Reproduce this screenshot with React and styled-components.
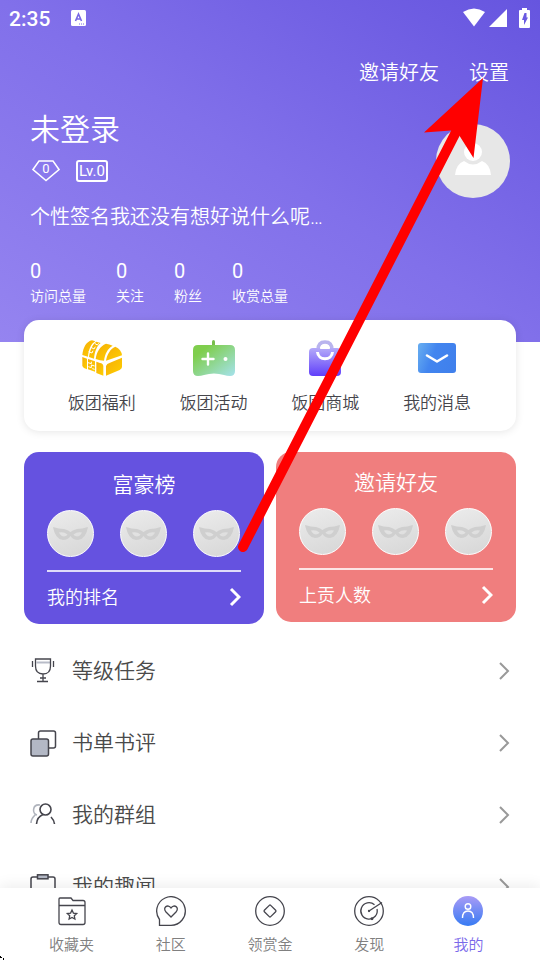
import React from "react";
import styled, { createGlobalStyle } from 'styled-components';

const colors = {
    primary: '#6552e0',
    coral: '#f07e7e',
    dark: '#45454b',
    gray: '#808080',
    active: '#7a69ea',
};

const GlobalStyle = createGlobalStyle`
  * {
    box-sizing: border-box;
  }

  body {
    margin: 0;
    background: #fff;
    font-family: Roboto, "Noto Sans CJK SC", sans-serif;
    font-weight: 350;
  }

  button {
    padding: 0;
    border: 0;
    background: none;
    color: inherit;
    font: inherit;
    cursor: pointer;
  }

  a {
    color: inherit;
    text-decoration: none;
  }

  svg {
    display: block;
    flex-shrink: 0;
  }
`;

const Screen = styled.div`
  position: relative;
  display: flex;
  flex-direction: column;
  height: 100vh;
  overflow: hidden;
`;

const Content = styled.main`
  flex: 1;
  min-height: 0;
  overflow-y: auto;
  scrollbar-width: none;
`;

const Header = styled.header`
  padding-bottom: 35px;
  color: #fff;
  background: linear-gradient(to top right, #9584f0 0%, #8170ea 50%, #6655df 100%);
`;

const StatusBar = styled.div`
  display: flex;
  align-items: center;
  height: 36px;
  padding: 0 10px 0 9px;
`;

const Clock = styled.span`
  font-size: 21px;
  font-weight: 500;
  line-height: 36px;
  margin-right: 21px;
  padding-top: 2px;
`;

const StatusIcons = styled.div`
  display: flex;
  align-items: center;
  gap: 11px;
  margin-left: auto;
`;

const TopActions = styled.div`
  display: flex;
  justify-content: flex-end;
  gap: 30px;
  padding: 0 31px;
  margin-top: 21px;
  font-size: 20px;
  line-height: 32px;
`;

const Profile = styled.section`
  display: flex;
  justify-content: space-between;
  padding: 19px 30px 0;
`;

const UserName = styled.h1`
  margin: 0;
  font-size: 30px;
  font-weight: 350;
  line-height: 44px;
`;

const Badges = styled.div`
  display: flex;
  align-items: center;
  gap: 16px;
  height: 38px;
  padding-left: 2px;
  font-weight: 400;
`;

const Gem = styled.span`
  display: grid;
  place-items: center;
  font-size: 13px;
  line-height: 16px;

  > * {
    grid-area: 1 / 1;
  }

  span {
    padding-bottom: 4px;
  }
`;

const Level = styled.span`
  padding: 0 1px;
  border: 2px solid #fff;
  border-radius: 3px;
  font-size: 15px;
  line-height: 18px;
`;

const Signature = styled.p`
  margin: 9px 0 0;
  font-size: 20px;
  line-height: 36px;
`;

const Avatar = styled.button`
  display: grid;
  place-items: center;
  width: 74px;
  height: 74px;
  margin-top: 16px;
  border-radius: 50%;
  background: #e7e7e7;
`;

const Stats = styled.dl`
  display: flex;
  gap: 30px;
  margin: 24px 0 0;
  padding: 0 30px;
`;

const Stat = styled.div`
  display: flex;
  flex-direction: column-reverse;
  gap: 2px;

  dt {
    font-size: 14px;
    line-height: 22px;
  }

  dd {
    margin: 0;
    font-size: 20px;
    font-weight: 400;
    line-height: 24px;
  }
`;

const Shortcuts = styled.nav`
  display: flex;
  position: relative;
  height: 111px;
  margin: -22px 24px 0;
  padding: 20px 23px 0 22px;
  border-radius: 15px;
  background: #fff;
  box-shadow: 0 1px 8px rgba(0, 0, 0, 0.1);
`;

const Shortcut = styled.a`
  display: flex;
  flex: 1;
  flex-direction: column;
  align-items: center;
  gap: 14px;
  color: ${colors.dark};
  font-size: 17px;
  line-height: 26px;
`;

const Cards = styled.div`
  display: grid;
  grid-template-columns: 1fr 1fr;
  align-items: start;
  gap: 12px;
  padding: 21px 24px 0;
`;

const Card = styled.section`
  padding: ${props => props.$compact ? '15px' : '17px'} 23px 8px;
  border-radius: 15px;
  background: ${props => props.$color};
  color: #fff;
`;

const CardTitle = styled.h2`
  margin: 0 0 9px;
  font-size: 21px;
  font-weight: 350;
  line-height: 32px;
  text-align: center;
`;

const Faces = styled.div`
  display: flex;
  justify-content: space-between;
  padding: 0 1px 13px 0;
  border-bottom: 2px solid rgba(255, 255, 255, 0.8);
`;

const Face = styled.span`
  display: grid;
  place-items: center;
  width: 47px;
  height: 47px;
  border: 1px solid #fff;
  border-radius: 50%;
  background: linear-gradient(160deg, #ececec, #d6d6d6);
`;

const CardLink = styled.a`
  display: flex;
  align-items: center;
  justify-content: space-between;
  padding-top: 8px;
  font-size: 18px;
  line-height: 36px;
`;

const Menu = styled.nav`
  padding-top: 11px;
`;

const MenuItem = styled.a`
  display: flex;
  align-items: center;
  gap: 15px;
  height: 72px;
  padding: 0 30px;
  color: #4a4a4a;
  font-size: 21px;
  line-height: 32px;

  span {
    flex: 1;
  }
`;

const TabBar = styled.nav`
  display: flex;
  position: relative;
  height: 72px;
  padding: 8px 22px 0;
  background: #fff;
  box-shadow: 0 -2px 14px rgba(0, 0, 0, 0.08);
`;

const Tab = styled.button`
  display: flex;
  flex: 1;
  flex-direction: column;
  align-items: center;
  gap: 8px;
  color: ${props => props.$active ? colors.active : colors.gray};
  font-size: 15px;
  line-height: 22px;
`;

const Pointer = styled.svg`
  position: absolute;
  top: 0;
  left: 0;
  pointer-events: none;
`;

const ChestIcon = () => (
    <svg width="40" height="36" viewBox="0 0 120 108">
        <defs>
            <linearGradient id="chest" x1="0" y1="0" x2="1" y2="1">
                <stop offset="0" stopColor="#f5ad08"/>
                <stop offset="1" stopColor="#ffd000"/>
            </linearGradient>
        </defs>
        <g fill="url(#chest)">
            <path d="M1 45C3 22 14 4 30 1L40 4C26 12 20 30 18 50Z"/>
            <path d="M21 51C24 32 30 14 43 5L56 9C44 18 38 36 36 56Z"/>
            <path d="M41 57C44 36 54 18 72 11Q82 12 92 17C76 26 69 42 66 62Q54 62 41 57Z"/>
            <path d="M72 62C75 44 84 27 100 20Q118 28 120 46Z"/>
            <path d="M1 51L15 56V88L6 84Q1 81 1 76Z"/>
            <path d="M18 57L39 64V95L18 88Z"/>
            <path d="M43 65L54 69Q63 70 64 78V107L43 99Z"/>
            <path d="M72 78Q74 70 84 68L120 53V81Q120 86 113 90L72 107Z"/>
        </g>
        <path d="M20 35L30 39L33 32M27 22L36 27L40 20M38 10L46 15L50 10M18 68L28 71V65M38 78L28 75V83L19 80M38 88L31 86" fill="none" stroke="#fff" strokeWidth="3"/>
    </svg>
);

const GamepadIcon = () => (
    <svg width="42" height="36" viewBox="0 0 42 36">
        <defs>
            <linearGradient id="pad" x1="0" y1="0" x2="1" y2="1">
                <stop offset="0.2" stopColor="#7fce4d"/>
                <stop offset="1" stopColor="#a5e2ed"/>
            </linearGradient>
        </defs>
        <path d="M20.500 1.500V7" stroke="#79bd4c" strokeWidth="3" strokeLinecap="round"/>
        <path d="M5 5H37Q42 5 42 10V31Q42 36 37 36Q34 36 31 35Q21 32 11 35Q8 36 5 36Q0 36 0 31V10Q0 5 5 5Z" fill="url(#pad)"/>
        <path d="M15 13.500V24.500M9.500 19H20.500" stroke="#fff" strokeWidth="2.400" strokeLinecap="round"/>
        <circle cx="32.500" cy="19" r="2" fill="#fff"/>
    </svg>
);

const BagIcon = () => (
    <svg width="32" height="36" viewBox="0 0 32 36">
        <defs>
            <linearGradient id="bag" x1="0" y1="0" x2="0" y2="1">
                <stop offset="0" stopColor="#b4aaf9"/>
                <stop offset="1" stopColor="#603ffa"/>
            </linearGradient>
        </defs>
        <path d="M9 10Q9 2 16 2T23 10" fill="none" stroke="#b9b4ee" strokeWidth="3.500"/>
        <path d="M4 8H28Q32 8 32 12V32Q32 36 28 36H4Q0 36 0 32V12Q0 8 4 8Z" fill="url(#bag)"/>
        <path d="M8.500 12C9 21 23 21 23.500 12" fill="none" stroke="#fff" strokeWidth="3"/>
        <path d="M11 9Q12 4 16 4T21 9Z" fill="#fff"/>
    </svg>
);

const MailIcon = () => (
    <svg width="38" height="36" viewBox="0 0 38 36">
        <defs>
            <linearGradient id="mail" x1="0" y1="0.3" x2="1" y2="0.6">
                <stop offset="0" stopColor="#62a8f0"/>
                <stop offset="0.4" stopColor="#4285ef"/>
                <stop offset="1" stopColor="#4080ec"/>
            </linearGradient>
        </defs>
        <rect y="3" width="38" height="30" rx="3" fill="url(#mail)"/>
        <path d="M9 15.500L19 21.500L29 15.500" fill="none" stroke="#fff" strokeWidth="2.600" strokeLinecap="round" strokeLinejoin="round"/>
    </svg>
);

const Mask = () => (
    <svg width="35" height="13" viewBox="0 0 35 13">
        <path fillRule="evenodd" fill="#cfcfcf" d="M0 0Q6 2 11 2Q15 3 17.500 5Q20 3 24 2Q29 2 35 0Q33 12 25 13Q20 13 17.500 9Q15 13 10 13Q2 12 0 0ZM6 5.500Q8 9.500 11 9.500Q14 9 14.500 7.500Q11 4.500 6 5.500ZM29 5.500Q27 9.500 24 9.500Q21 9 20.500 7.500Q24 4.500 29 5.500Z"/>
    </svg>
);

const CardChevron = () => (
    <svg width="12" height="22" viewBox="0 0 12 22" fill="none" stroke="#fff" strokeWidth="3">
        <path d="M2 2L10 10L2 18"/>
    </svg>
);

const MenuChevron = () => (
    <svg width="11" height="18" viewBox="0 0 11 18" fill="none" stroke="#999" strokeWidth="2">
        <path d="M1 1L9 9L1 17"/>
    </svg>
);

const LineIcon = ({children, size = 27}) => (
    <svg width={size} height={size} viewBox={`0 0 ${size} ${size}`} fill="none" stroke="#45454d" strokeWidth="1.300">
        {children}
    </svg>
);

const CupIcon = () => (
    <LineIcon>
        <path d="M6.500 4.500H20" stroke="#b8bcc8" strokeWidth="2"/>
        <path d="M5.500 1H20.500V8Q20.500 16 13 16T5.500 8ZM13 16V23M10 20H16M7 23.500H18M2.500 3V9M23.500 3V9"/>
    </LineIcon>
);

const BooksIcon = () => (
    <LineIcon>
        <rect x="8.500" y="1" width="17" height="17" rx="2" strokeWidth="1.500"/>
        <rect x="1" y="9" width="17.500" height="17" rx="2" fill="#b3b8c5" strokeWidth="1.500"/>
    </LineIcon>
);

const GroupIcon = () => (
    <LineIcon>
        <path d="M10 3C2 2 2 12 7 13M5 13Q1 17 1 21" stroke="#b0b4bd" strokeWidth="1.600"/>
        <circle cx="15.500" cy="7.500" r="5.500" strokeWidth="1.600"/>
        <path d="M6.500 22Q7 15 13 12.500M21 15Q24 18 24.500 22" strokeWidth="1.600"/>
    </LineIcon>
);

const ClipboardIcon = () => (
    <LineIcon>
        <path d="M7 3H3Q1 3 1 5V26H25V5Q25 3 23 3H18" strokeWidth="1.500"/>
        <rect x="7.500" y="0.800" width="10.500" height="4" fill="#b3b8c5" strokeWidth="1.500"/>
    </LineIcon>
);

const FolderIcon = () => (
    <LineIcon size={30}>
        <path d="M3 2H14L16 4.500H26Q28 4.500 28 6.500V26.500Q28 28.500 26 28.500H4Q2 28.500 2 26.500V3Q2 2 3 2ZM2 9.500H28"/>
        <path d="M15 14L16.400 17.100L19.700 17.500L17.300 19.800L17.900 23.100L15 21.500L12.100 23.100L12.700 19.800L10.300 17.500L13.600 17.100Z"/>
    </LineIcon>
);

const CommunityIcon = () => (
    <LineIcon size={30}>
        <path d="M3.500 29.300V23.500A14.300 14.300 0 1 1 15 29.300Z"/>
        <path d="M15 21L10 16C6 11.500 12 7.500 15 12C18 7.500 24 11.500 20 16Z"/>
    </LineIcon>
);

const CoinIcon = () => (
    <LineIcon size={30}>
        <circle cx="15" cy="15" r="14.300"/>
        <rect x="10.500" y="10.500" width="9" height="9" rx="1" transform="rotate(45 15 15)"/>
    </LineIcon>
);

const RadarIcon = () => (
    <LineIcon size={30}>
        <circle cx="15" cy="15" r="14.300"/>
        <path d="M15 15L28 6.500M20.500 8.800A8.200 8.200 0 1 0 23 13"/>
        <circle cx="15" cy="15" r="0.500" fill="#45454d"/>
        <circle cx="18" cy="22.700" r="0.800" fill="#45454d"/>
    </LineIcon>
);

const MeIcon = () => (
    <svg width="30" height="30" viewBox="0 0 30 30">
        <defs>
            <linearGradient id="me" x1="0" y1="0" x2="0" y2="1">
                <stop offset="0" stopColor="#a99bf6"/>
                <stop offset="1" stopColor="#377bf3"/>
            </linearGradient>
        </defs>
        <circle cx="15" cy="15" r="15" fill="url(#me)"/>
        <g fill="none" stroke="#fff" strokeWidth="1.400">
            <circle cx="15" cy="10.500" r="2.800"/>
            <path d="M9.500 22Q9.500 15 15 15T20.500 22"/>
        </g>
    </svg>
);

const stats = [
    {label: '访问总量', value: 0},
    {label: '关注', value: 0},
    {label: '粉丝', value: 0},
    {label: '收赏总量', value: 0},
];

const shortcuts = [
    {label: '饭团福利', Icon: ChestIcon},
    {label: '饭团活动', Icon: GamepadIcon},
    {label: '饭团商城', Icon: BagIcon},
    {label: '我的消息', Icon: MailIcon},
];

const menu = [
    {label: '等级任务', Icon: CupIcon},
    {label: '书单书评', Icon: BooksIcon},
    {label: '我的群组', Icon: GroupIcon},
    {label: '我的趣闻', Icon: ClipboardIcon},
];

const tabs = [
    {label: '收藏夹', Icon: FolderIcon},
    {label: '社区', Icon: CommunityIcon},
    {label: '领赏金', Icon: CoinIcon},
    {label: '发现', Icon: RadarIcon},
    {label: '我的', Icon: MeIcon, active: true},
];

const RankCard = ({title, link, color, compact}) => (
    <Card $color={color} $compact={compact}>
        <CardTitle>{title}</CardTitle>
        <Faces>
            <Face><Mask/></Face>
            <Face><Mask/></Face>
            <Face><Mask/></Face>
        </Faces>
        <CardLink href="#">
            {link}
            <CardChevron/>
        </CardLink>
    </Card>
);

const App = () => (
    <Screen>
        <GlobalStyle/>
        <Content>
            <Header>
                <StatusBar>
                    <Clock>2:35</Clock>
                    <svg width="15" height="16" viewBox="0 0 15 16">
                        <rect width="15" height="16" rx="1.500" fill="#fff"/>
                        <path d="M4.500 11L7.500 4L10.500 11M5.500 9H9.500" fill="none" stroke="#7868e5" strokeWidth="1.600"/>
                        <path d="M8 14H14" stroke="#7868e5" strokeWidth="1" strokeDasharray="1 1"/>
                    </svg>
                    <StatusIcons>
                        <svg width="45" height="20" viewBox="0 0 45 20" fill="#fff">
                            <path d="M0 4Q11 -3 22 4L11 18.500Z"/>
                            <path d="M26 19L44 1V19Z"/>
                        </svg>
                        <svg width="11" height="20" viewBox="0 0 11 20">
                            <path d="M3 0H8V2H10Q11 2 11 3V19Q11 20 10 20H1Q0 20 0 19V3Q0 2 1 2H3Z" fill="#fff"/>
                            <path d="M5.500 5H7.500V9.500H9L5 17V12H3Z" fill="#6a5ae1"/>
                        </svg>
                    </StatusIcons>
                </StatusBar>
                <TopActions>
                    <button type="button">邀请好友</button>
                    <button type="button">设置</button>
                </TopActions>
                <Profile>
                    <div>
                        <UserName>未登录</UserName>
                        <Badges>
                            <Gem>
                                <svg width="28" height="22" viewBox="0 0 28 22" fill="none" stroke="#fff" strokeWidth="1.500">
                                    <path d="M7 1H21L27 9.500L14 20.500L1 9.500Z"/>
                                </svg>
                                <span>0</span>
                            </Gem>
                            <Level>Lv.0</Level>
                        </Badges>
                        <Signature>个性签名我还没有想好说什么呢…</Signature>
                    </div>
                    <Avatar type="button" aria-label="头像">
                        <svg width="36" height="36" viewBox="0 0 36 36" fill="#fff">
                            <circle cx="18" cy="9" r="9"/>
                            <path d="M0 32Q1 21 9 18Q18 25 27 18Q35 21 36 32Z"/>
                        </svg>
                    </Avatar>
                </Profile>
                <Stats>
                    {stats.map(({label, value}) => (
                        <Stat key={label}>
                            <dt>{label}</dt>
                            <dd>{value}</dd>
                        </Stat>
                    ))}
                </Stats>
            </Header>
            <Shortcuts>
                {shortcuts.map(({label, Icon}) => (
                    <Shortcut key={label} href="#">
                        <Icon/>
                        {label}
                    </Shortcut>
                ))}
            </Shortcuts>
            <Cards>
                <RankCard title="富豪榜" link="我的排名" color={colors.primary}/>
                <RankCard title="邀请好友" link="上贡人数" color={colors.coral} compact/>
            </Cards>
            <Menu>
                {menu.map(({label, Icon}) => (
                    <MenuItem key={label} href="#">
                        <Icon/>
                        <span>{label}</span>
                        <MenuChevron/>
                    </MenuItem>
                ))}
            </Menu>
        </Content>
        <TabBar>
            {tabs.map(({label, Icon, active}) => (
                <Tab key={label} type="button" $active={active}>
                    <Icon/>
                    {label}
                </Tab>
            ))}
        </TabBar>
        <Pointer width="540" height="960" viewBox="0 0 540 960">
            <path d="M243 547L456 132" stroke="#f00" strokeWidth="10" strokeLinecap="round"/>
            <path d="M483 78L424 132.500L451 130.500L459 135L473.500 158Z" fill="#f00"/>
            <path d="M0 956H1V957H2V958H0ZM3 958H4V960H3Z" fill="#000"/>
        </Pointer>
    </Screen>
);

export default App;
